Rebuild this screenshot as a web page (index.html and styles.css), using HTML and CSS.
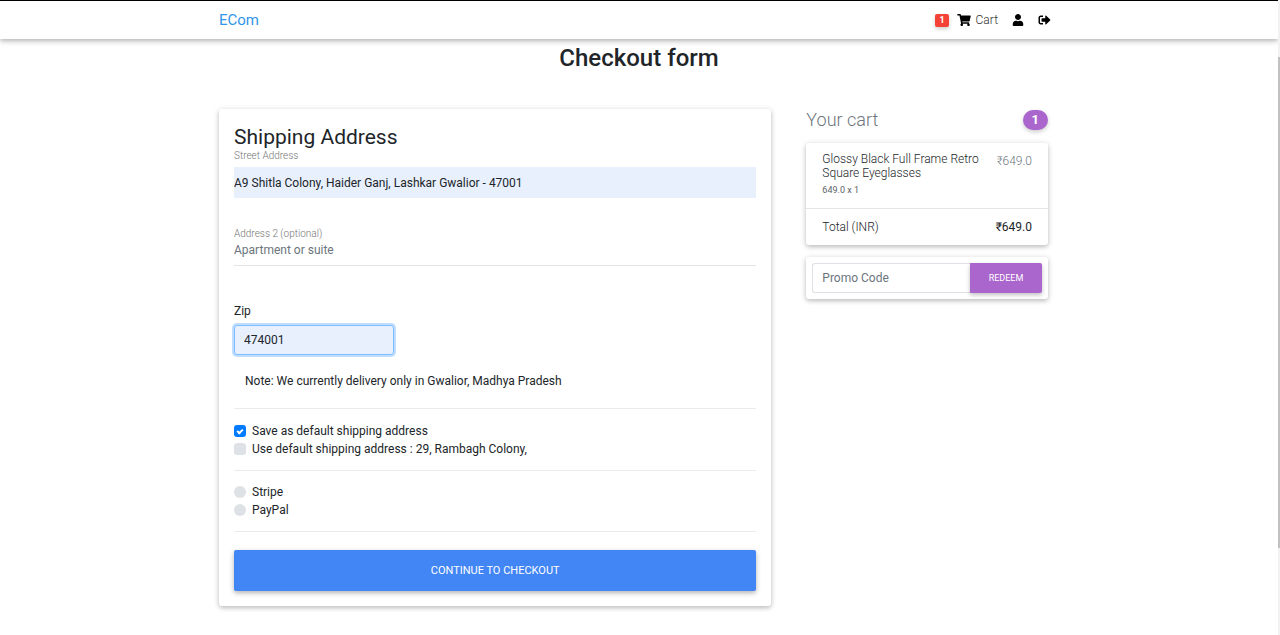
FILE: index.html
```html
<!DOCTYPE html>
<html lang="en">
<head>
<meta charset="utf-8">
<meta name="viewport" content="width=device-width, initial-scale=1">
<title>Checkout form</title>
<link rel="stylesheet" href="styles.css">
</head>
<body>
<nav class="navbar">
  <div class="container navbar-inner">
    <a class="brand" href="#">ECom</a>
    <div class="nav-links">
      <a class="nav-link cart-link" href="#">
        <span class="count">1</span>
        <svg class="icon-cart" viewBox="0 0 576 512" aria-hidden="true"><path d="M528.12 301.319l47.273-208C578.806 78.301 567.391 64 551.99 64H159.208l-9.166-44.81C147.758 8.021 137.93 0 126.529 0H24C10.745 0 0 10.745 0 24v16c0 13.255 10.745 24 24 24h69.883l70.248 343.435C147.325 417.1 136 435.222 136 456c0 30.928 25.072 56 56 56s56-25.072 56-56c0-15.674-6.447-29.835-16.824-40h209.647C430.447 426.165 424 440.326 424 456c0 30.928 25.072 56 56 56s56-25.072 56-56c0-22.172-12.888-41.332-31.579-50.405l5.517-24.276c3.413-15.018-8.002-29.319-23.403-29.319H218.117l-6.545-32h293.145c11.206 0 20.92-7.754 23.403-18.681z"/></svg>
        <span class="cart-text">Cart</span>
      </a>
      <a class="nav-link" href="#" aria-label="Account">
        <svg class="icon-user" viewBox="0 0 448 512" aria-hidden="true"><path d="M224 256c70.7 0 128-57.3 128-128S294.7 0 224 0 96 57.3 96 128s57.3 128 128 128zm89.600 32h-16.700c-22.200 10.200-46.900 16-72.900 16s-50.600-5.800-72.900-16h-16.700C60.200 288 0 348.200 0 422.400V464c0 26.500 21.500 48 48 48h352c26.500 0 48-21.500 48-48v-41.600c0-74.200-60.200-134.400-134.400-134.400z"/></svg>
      </a>
      <a class="nav-link" href="#" aria-label="Log out">
        <svg class="icon-logout" viewBox="0 0 512 512" aria-hidden="true"><path d="M497 273L329 441c-15 15-41 4.500-41-17v-96H152c-13.300 0-24-10.700-24-24v-96c0-13.300 10.700-24 24-24h136V88c0-21.400 25.900-32 41-17l168 168c9.300 9.400 9.300 24.600 0 34zM192 436v-40c0-6.600-5.400-12-12-12H96c-17.700 0-32-14.300-32-32V160c0-17.700 14.300-32 32-32h84c6.600 0 12-5.400 12-12V76c0-6.600-5.400-12-12-12H96c-53 0-96 43-96 96v192c0 53 43 96 96 96h84c6.600 0 12-5.400 12-12z"/></svg>
      </a>
    </div>
  </div>
</nav>

<main class="container main">
  <h1 class="page-title">Checkout form</h1>
  <div class="columns">
    <form class="card checkout">
      <h2 class="section-title">Shipping Address</h2>
      <div class="field">
        <label class="field-label" for="street">Street Address</label>
        <input class="line-input filled" id="street" type="text" value="A9 Shitla Colony, Haider Ganj, Lashkar Gwalior - 47001">
      </div>
      <div class="field">
        <label class="field-label" for="address2">Address 2 (optional)</label>
        <input class="line-input underlined" id="address2" type="text" placeholder="Apartment or suite">
      </div>
      <div class="zip">
        <label for="zip">Zip</label>
        <input class="zip-input" id="zip" type="text" value="474001">
      </div>
      <p class="note">Note: We currently delivery only in Gwalior, Madhya Pradesh</p>
      <div class="options">
        <label class="option"><input class="tick" type="checkbox" checked>Save as default shipping address</label>
        <label class="option"><input class="tick" type="checkbox">Use default shipping address : 29, Rambagh Colony,</label>
      </div>
      <div class="options">
        <label class="option"><input class="tick round" type="radio" name="payment">Stripe</label>
        <label class="option"><input class="tick round" type="radio" name="payment">PayPal</label>
      </div>
      <div class="submit-row">
        <button class="submit" type="submit">CONTINUE TO CHECKOUT</button>
      </div>
    </form>

    <aside>
      <h2 class="cart-title"><span>Your cart</span><span class="pill">1</span></h2>
      <ul class="card cart-list">
        <li class="cart-item">
          <div>
            <h3 class="item-name">Glossy Black Full Frame Retro Square Eyeglasses</h3>
            <small class="item-qty">649.0 x 1</small>
          </div>
          <span class="item-price">₹649.0</span>
        </li>
        <li class="cart-item total">
          <span>Total (INR)</span>
          <strong class="total-price">₹649.0</strong>
        </li>
      </ul>
      <form class="card promo">
        <input class="promo-input" type="text" placeholder="Promo Code" aria-label="Promo Code">
        <button class="redeem" type="button">REDEEM</button>
      </form>
    </aside>
  </div>
</main>
<div class="scroll-track"><div class="scroll-thumb"></div></div>
</body>
</html>
```
FILE: styles.css
```css
*, *::before, *::after { box-sizing: border-box; }
body {
  margin: 0;
  padding-right: 2px;
  background: #fff;
  color: #212529;
  font: 400 12px/18px Roboto, "Noto Sans", sans-serif;
}
h1, h2, h3, p, ul { margin: 0; padding: 0; }
input, button { font: inherit; }
ul { list-style: none; }
a { color: inherit; text-decoration: none; }

.container { width: 100%; max-width: 864px; margin: 0 auto; padding: 0 12px; }
.main { padding-bottom: 24px; }

.navbar {
  height: 39px;
  border-top: 1px solid #000;
  box-shadow: 0 2px 4px rgba(0, 0, 0, .2), 0 2px 8px rgba(0, 0, 0, .12);
}
.navbar-inner { display: flex; align-items: center; justify-content: space-between; height: 38px; padding-right: 20px; }
.brand { color: #2f96e8; font-size: 15px; }
.nav-links { display: flex; align-items: center; gap: 14px; color: #000; }
.nav-link { display: flex; align-items: center; }
.nav-link svg { display: block; fill: currentColor; }
.cart-link { gap: 5px; font-weight: 300; }
.cart-text { color: #333; }
.count {
  margin-right: 3px;
  padding: 0 4px;
  border-radius: 2px;
  background: #f44336;
  color: #fff;
  font-size: 9px;
  font-weight: 700;
  line-height: 13px;
  box-shadow: 0 2px 4px rgba(0, 0, 0, .2);
}
.icon-cart { width: 14px; height: 12px; }
.icon-user { width: 12px; height: 12px; }
.icon-logout { width: 13px; height: 12px; }

.page-title { padding: 4px 0 35px; font-size: 24px; font-weight: 500; line-height: 31px; text-align: center; }
.columns {
  display: grid;
  grid-template-columns: minmax(0, 16fr) minmax(0, 7fr);
  column-gap: 35px;
  align-items: start;
  padding-right: 11px;
}
.card { background: #fff; border-radius: 3px; box-shadow: 0 2px 4px rgba(0, 0, 0, .18), 0 1px 7px rgba(0, 0, 0, .12); }

.checkout { padding: 15px; }
.section-title { font-size: 21px; font-weight: 400; line-height: 26px; }
.field { margin-bottom: 30px; }
.field-label { display: block; color: #757575; font-size: 10px; font-weight: 300; line-height: 12px; }
.line-input { display: block; width: 100%; border: 0; padding: 0; outline: 0; color: inherit; }
.filled { height: 31px; margin-top: 5px; background: #e8f0fe; }
.underlined { height: 26px; padding-bottom: 5px; border-bottom: 1px solid #e2e4e7; }
input::placeholder { color: #6c757d; opacity: 1; }
.zip { padding-top: 6px; }
.zip label { display: block; margin-bottom: 5px; }
.zip-input {
  display: block;
  width: 160px;
  height: 30px;
  padding: 0 9px;
  border: 1px solid #80bdff;
  border-radius: 3px;
  outline: 0;
  background: #e8f0fe;
  color: inherit;
  box-shadow: 0 0 0 2px #bfdeff;
}
.note { padding: 17px 11px 18px; }
.options { padding: 12px 0; border-top: 1px solid #ebebeb; }
.options:first-of-type { padding-top: 13px; }
.option { display: flex; align-items: center; gap: 6px; }
.note + .options { padding-top: 13px; }
.tick {
  display: grid;
  place-items: center;
  appearance: none;
  width: 12px;
  height: 12px;
  margin: 0;
  border-radius: 3px;
  background: #dee2e6;
}
.tick:checked { background: #007bff; }
.tick:checked::before {
  content: "";
  width: 6px;
  height: 4px;
  border: solid #fff;
  border-width: 0 0 2px 2px;
  transform: rotate(-45deg);
}
.round { border-radius: 50%; }
.submit-row { padding-top: 18px; border-top: 1px solid #ebebeb; }
.submit {
  display: block;
  width: 100%;
  height: 41px;
  border: 0;
  border-radius: 2px;
  background: #4285f4;
  color: #fff;
  font-size: 11px;
  box-shadow: 0 2px 4px rgba(0, 0, 0, .2), 0 2px 7px rgba(0, 0, 0, .12);
}

.cart-title { display: flex; align-items: center; justify-content: space-between; margin-bottom: 12px; color: #6c757d; font-size: 18px; font-weight: 300; line-height: 22px; }
.pill {
  padding: 0 9px;
  border-radius: 10px;
  background: #aa66cc;
  color: #fff;
  font-size: 13px;
  font-weight: 700;
  line-height: 20px;
  box-shadow: 0 2px 4px rgba(0, 0, 0, .2);
}
.cart-item { display: flex; justify-content: space-between; gap: 15px; padding: 9px 16px; font-weight: 300; }
.item-name { font-size: 12px; font-weight: 300; line-height: 14px; }
.item-qty { display: block; padding-top: 2px; font-size: 9px; font-weight: 400; color: #5c6369; line-height: 17px; }
.item-price { color: #6c757d; }
.total { border-top: 1px solid #e5e5e5; }
.total-price { font-weight: 400; }
.promo { display: flex; margin-top: 12px; padding: 6px; }
.promo-input {
  flex: 1;
  min-width: 0;
  height: 30px;
  padding: 0 9px;
  border: 1px solid #dee2e6;
  border-right: 0;
  border-radius: 3px 0 0 3px;
}
.redeem {
  width: 72px;
  padding: 0;
  border: 0;
  border-radius: 0 2px 2px 0;
  background: #aa66cc;
  color: #fff;
  font-size: 9px;
  box-shadow: 0 2px 4px rgba(0, 0, 0, .25);
}

.scroll-track { position: fixed; top: 1px; right: 0; bottom: 0; width: 2px; padding-top: 56px; background: #f1f1f1; }
.scroll-thumb { height: 85%; background: #c1c1c1; }
```
